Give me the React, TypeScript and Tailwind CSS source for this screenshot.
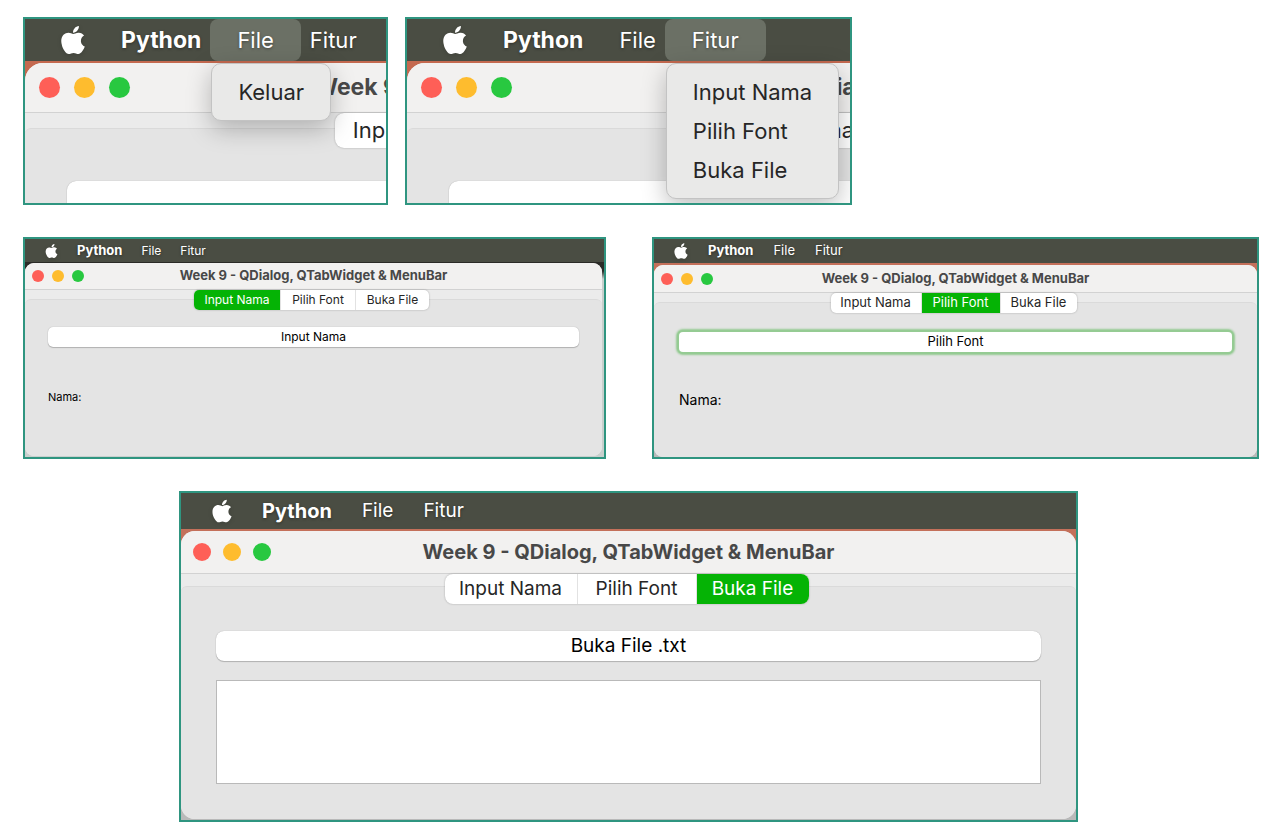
import type { ReactNode } from "react";
import { FaApple } from "react-icons/fa";

type Scale = "sm" | "md" | "lg" | "xl";
type TabName = "Input Nama" | "Pilih Font" | "Buka File";

const TABS: TabName[] = ["Input Nama", "Pilih Font", "Buka File"];

const styles = {
  sm: {
    bar: "h-[23px] gap-[19px] pl-[20px] text-[12px]",
    apple: "h-[16px] w-[13px]",
    appName: "text-[13px]",
    desk: "bg-[linear-gradient(#2b2b27_32px,#c9cfcd_40px)]",
    window: "mt-px mr-[2px] mb-px rounded-[9px]",
    title: "h-[27px] text-[13px]",
    lights: "gap-[8px] pl-[7px]",
    light: "size-[12px]",
    tabs: "-mb-[11px] h-[20px] text-[12px]",
    tabRound: "rounded-[5px]",
    widths: ["w-[87px]", "w-[75px]", "w-[73px]"],
    pane: "px-[23px] pt-[27px]",
    button: "h-[20px] rounded-[5px] text-[12px]",
  },
  md: {
    bar: "h-[24px] gap-[20px] pl-[20px] text-[13px]",
    apple: "h-[18px] w-[14px]",
    appName: "text-[13px]",
    desk: "bg-[linear-gradient(#c4705a_60px,#b9b9b9_80px)]",
    window: "mt-[2px] rounded-[9px]",
    title: "h-[28px] text-[13px]",
    lights: "gap-[8px] pl-[7px]",
    light: "size-[12px]",
    tabs: "-mb-[11px] h-[20px] text-[13px]",
    tabRound: "rounded-[5px]",
    widths: ["w-[91px]", "w-[79px]", "w-[76px]"],
    pane: "px-[25px] pt-[29px]",
    button: "h-[20px] rounded-[4px] text-[13px]",
  },
  lg: {
    bar: "h-[36px] gap-[30px] pl-[31px] text-[19px]",
    apple: "h-[26px] w-[20px]",
    appName: "text-[20px]",
    desk: "bg-[linear-gradient(#c4705a_60px,#b9b9b9_80px)]",
    window: "mt-[2px] mb-px rounded-[14px]",
    title: "h-[43px] text-[20px]",
    lights: "gap-[12px] pl-[12px]",
    light: "size-[18px]",
    tabs: "-mb-[18px] h-[30px] text-[19px]",
    tabRound: "rounded-[8px]",
    widths: ["w-[133px]", "w-[119px]", "w-[112px]"],
    pane: "px-[35px] pt-[44px]",
    button: "h-[30px] rounded-[8px] text-[19px]",
  },
  xl: {
    bar: "h-[42px] gap-[36px] pl-[36px] text-[22px]",
    apple: "h-[32px] w-[24px]",
    appName: "text-[23px]",
    desk: "bg-[#c4694f]",
    window: "mt-[2px] rounded-t-[18px]",
    title: "h-[50px] text-[23px]",
    lights: "gap-[14px] pl-[14px]",
    light: "size-[21px]",
    tabs: "-mb-[20px] h-[35px] text-[22px]",
    tabRound: "rounded-[9px]",
    widths: ["w-[157px]", "w-[140px]", "w-[132px]"],
    pane: "px-[42px] pt-[52px]",
    button: "h-[35px] rounded-[9px] text-[22px]",
  },
};

function Menu({ label, items }: { label: string; items?: string[] }) {
  return (
    <div className="relative flex h-full items-center">
      {items && <span className="absolute inset-y-0 -inset-x-[27px] rounded-[8px] bg-[#6b7065]" />}
      <button type="button" className="relative [text-shadow:0_1px_3px_rgba(0,0,0,0.4)]">
        {label}
      </button>
      {items && (
        <ul
          role="menu"
          className="absolute top-[44px] -left-[26px] z-30 rounded-[10px] border border-[#c3c3c3] bg-[#e9e9e8] pt-[9px] pb-[8px] text-[#262626] shadow-[0_8px_24px_rgba(0,0,0,0.25)]"
        >
          {items.map((item) => (
            <li key={item} role="none">
              <button
                type="button"
                role="menuitem"
                className="flex h-[39px] w-full items-center px-[26px] whitespace-nowrap"
              >
                {item}
              </button>
            </li>
          ))}
        </ul>
      )}
    </div>
  );
}

function MenuBar({ scale, open }: { scale: Scale; open?: "File" | "Fitur" }) {
  const s = styles[scale];
  return (
    <nav className={`relative z-20 flex shrink-0 items-center bg-[#4a4d43] text-white ${s.bar}`}>
      <FaApple className={`shrink-0 drop-shadow-sm ${s.apple}`} aria-label="Apple" />
      <button type="button" className={`font-bold [text-shadow:0_1px_3px_rgba(0,0,0,0.4)] ${s.appName}`}>
        Python
      </button>
      <Menu label="File" items={open === "File" ? ["Keluar"] : undefined} />
      <Menu label="Fitur" items={open === "Fitur" ? TABS : undefined} />
    </nav>
  );
}

function AppWindow({ scale, active, children }: { scale: Scale; active?: TabName; children: ReactNode }) {
  const s = styles[scale];
  return (
    <section className={`flex grow flex-col overflow-hidden bg-[#ebebeb] ${s.window}`}>
      <header
        className={`grid shrink-0 grid-cols-[1fr_auto_1fr] items-center border-b border-[#d2d2d2] bg-[#f2f1f0] font-bold text-[#484848] ${s.title}`}
      >
        <div className={`flex ${s.lights}`}>
          <span className={`rounded-full bg-[#fe5f57] ${s.light}`} />
          <span className={`rounded-full bg-[#febc2e] ${s.light}`} />
          <span className={`rounded-full bg-[#28c840] ${s.light}`} />
        </div>
        <h2 className="whitespace-nowrap">Week 9 - QDialog, QTabWidget &amp; MenuBar</h2>
      </header>
      <div className="flex grow flex-col">
        <div role="tablist" className={`z-10 mr-[4px] flex self-center ${s.tabs}`}>
          <div
            className={`flex divide-x divide-[#e2e2e2] overflow-hidden bg-white shadow-[0_0_2px_rgba(0,0,0,0.3)] ${s.tabRound}`}
          >
            {TABS.map((tab, i) => (
              <button
                key={tab}
                type="button"
                role="tab"
                aria-selected={tab === active}
                className={`whitespace-nowrap ${s.widths[i]} ${
                  tab === active ? "bg-[#05b305] text-white" : "text-[#262626]"
                }`}
              >
                {tab}
              </button>
            ))}
          </div>
        </div>
        <div className={`grow rounded-t-[6px] border-t border-[#dadada] bg-[#e4e4e4] ${s.pane}`}>{children}</div>
      </div>
    </section>
  );
}

function PushButton({ scale, focused, children }: { scale: Scale; focused?: boolean; children?: ReactNode }) {
  return (
    <button
      type="button"
      aria-label={children ? undefined : "Input Nama"}
      className={`flex w-full items-center justify-center bg-white text-black ${styles[scale].button} ${
        focused
          ? "shadow-[0_0_0_2px_#95cb93,0_0_2px_3px_#95cb93]"
          : "shadow-[0_0_1px_rgba(0,0,0,0.3),0_1px_1px_rgba(0,0,0,0.2)]"
      }`}
    >
      {children}
    </button>
  );
}

function Frame({ scale, className, children }: { scale: Scale; className: string; children: ReactNode }) {
  return (
    <article
      className={`flex min-w-0 flex-col overflow-hidden border-2 border-[#2f9580] ${styles[scale].desk} ${className}`}
    >
      {children}
    </article>
  );
}

function CroppedDesktop({ open }: { open: "File" | "Fitur" }) {
  return (
    <Frame scale="xl" className="h-[188px]">
      <MenuBar scale="xl" open={open} />
      <div className="flex w-[1052px] grow flex-col">
        <AppWindow scale="xl">
          <PushButton scale="xl" />
        </AppWindow>
      </div>
    </Frame>
  );
}

export default function App() {
  return (
    <main className="flex min-h-screen flex-col gap-[32px] bg-white pt-[17px] pr-[21px] pb-[18px] pl-[23px] font-[Inter,'Liberation_Sans',sans-serif]">
      <div className="grid grid-cols-[365fr_447fr_390fr] gap-[17px]">
        <CroppedDesktop open="File" />
        <CroppedDesktop open="Fitur" />
      </div>

      <div className="grid grid-cols-[583fr_607fr] gap-[46px]">
        <Frame scale="sm" className="h-[222px]">
          <MenuBar scale="sm" />
          <AppWindow scale="sm" active="Input Nama">
            <PushButton scale="sm">Input Nama</PushButton>
            <p className="mt-[42px] text-[11px] leading-[16px] text-black">Nama:</p>
          </AppWindow>
        </Frame>
        <Frame scale="md" className="h-[222px]">
          <MenuBar scale="md" />
          <AppWindow scale="md" active="Pilih Font">
            <PushButton scale="md" focused>
              Pilih Font
            </PushButton>
            <p className="mt-[40px] text-[14px] leading-[16px] text-black">Nama:</p>
          </AppWindow>
        </Frame>
      </div>

      <div className="grid grid-cols-[156fr_899fr_181fr]">
        <Frame scale="lg" className="col-start-2">
          <MenuBar scale="lg" />
          <AppWindow scale="lg" active="Buka File">
            <PushButton scale="lg">Buka File .txt</PushButton>
            <textarea
              aria-label="Isi file"
              className="mt-[19px] mb-[35px] block h-[104px] w-full resize-none border border-[#b9b9b9] bg-white"
            />
          </AppWindow>
        </Frame>
      </div>
    </main>
  );
}
